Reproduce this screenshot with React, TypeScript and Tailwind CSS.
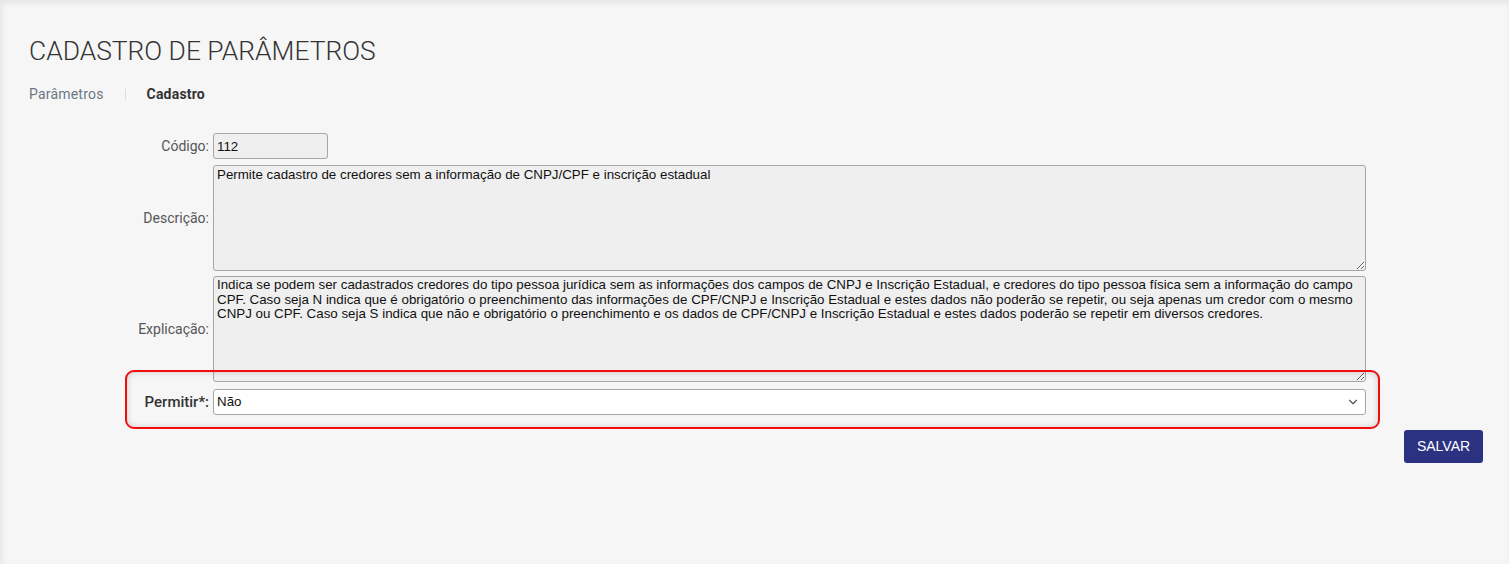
import React from "react";
import { ChevronDown } from "lucide-react";

const descricao =
  "Permite cadastro de credores sem a informação de CNPJ/CPF e inscrição estadual";

const explicacao =
  "Indica se podem ser cadastrados credores do tipo pessoa jurídica sem as informações dos campos de CNPJ e Inscrição Estadual, e credores do tipo pessoa física sem a informação do campo CPF. Caso seja N indica que é obrigatório o preenchimento das informações de CPF/CNPJ e Inscrição Estadual e estes dados não poderão se repetir, ou seja apenas um credor com o mesmo CNPJ ou CPF. Caso seja S indica que não e obrigatório o preenchimento e os dados de CPF/CNPJ e Inscrição Estadual e estes dados poderão se repetir em diversos credores.";

const fieldFont = { fontFamily: '"Liberation Sans", Arial, sans-serif' };

const App: React.FC = () => {
  return (
    <div
      className="min-h-[564px] bg-[#f6f6f6] pt-[35px] shadow-[inset_2px_3px_6px_rgba(0,0,0,0.07)]"
      style={{ fontFamily: "Roboto, sans-serif" }}
    >
      <h1 className="pl-[29px] text-[26.4px] font-light leading-[32px] text-[#333]">
        CADASTRO DE PARÂMETROS
      </h1>

      <nav className="mt-[18px] flex items-center pl-[29px] text-[14px] leading-[18px] tracking-[0.2px]">
        <span className="text-[#6b7785]">Parâmetros</span>
        <span className="mx-[21px] h-[11px] w-px bg-[#dcdcdc]" />
        <span className="font-bold text-[#333]">Cadastro</span>
      </nav>

      <div className="ml-[126px] mt-[30px] w-[1240px]">
        <div className="grid grid-cols-[83px_1fr] items-center gap-x-[4px]">
          <label className="text-right text-[14px] text-[#555]">Código:</label>
          <input
            readOnly
            value="112"
            style={fieldFont}
            className="h-[26px] w-[115px] rounded-[3px] border border-[#a6a6a6] bg-[#efefef] px-[3px] text-[13.33px] text-[#111] outline-none"
          />

          <label className="mt-[6px] text-right text-[14px] text-[#555]">Descrição:</label>
          <textarea
            readOnly
            value={descricao}
            style={fieldFont}
            className="mt-[6px] h-[106px] rounded-[3px] border border-[#a6a6a6] bg-[#efefef] px-[3px] pt-[1px] text-[13.33px] leading-[15px] text-[#111] outline-none"
          />

          <label className="mt-[5px] text-right text-[14px] text-[#555]">Explicação:</label>
          <textarea
            readOnly
            value={explicacao}
            style={fieldFont}
            className="mt-[5px] h-[106px] rounded-[3px] border border-[#a6a6a6] bg-[#efefef] px-[3px] pt-[1px] text-[13.33px] leading-[14.7px] text-[#111] outline-none"
          />
        </div>

        <div className="relative mt-[7px] grid grid-cols-[83px_1fr] items-center gap-x-[4px]">
          <div className="pointer-events-none absolute -bottom-[14px] -left-px -right-[14px] -top-[19px] rounded-[9px] border-2 border-[#f20d0d] shadow-[inset_0_0_6px_rgba(0,0,0,0.18)]" />
          <label className="text-right text-[15px] font-medium text-[#333]">Permitir*:</label>
          <div className="relative">
            <select
              defaultValue="N"
              style={fieldFont}
              className="h-[26px] w-full appearance-none rounded-[3px] border border-[#a6a6a6] bg-white pl-[3px] text-[13.33px] text-[#111] outline-none"
            >
              <option value="N">Não</option>
              <option value="S">Sim</option>
            </select>
            <ChevronDown
              className="pointer-events-none absolute right-[6px] top-1/2 h-[14px] w-[14px] -translate-y-1/2 text-[#555]"
              strokeWidth={2}
            />
          </div>
        </div>
      </div>

      <div className="mt-[15px] flex justify-end pr-[26px]">
        <button
          style={fieldFont}
          className="h-[33px] w-[79px] rounded-[3px] bg-[#2b3282] text-[14px] text-white"
        >
          SALVAR
        </button>
      </div>
    </div>
  );
};

export default App;
